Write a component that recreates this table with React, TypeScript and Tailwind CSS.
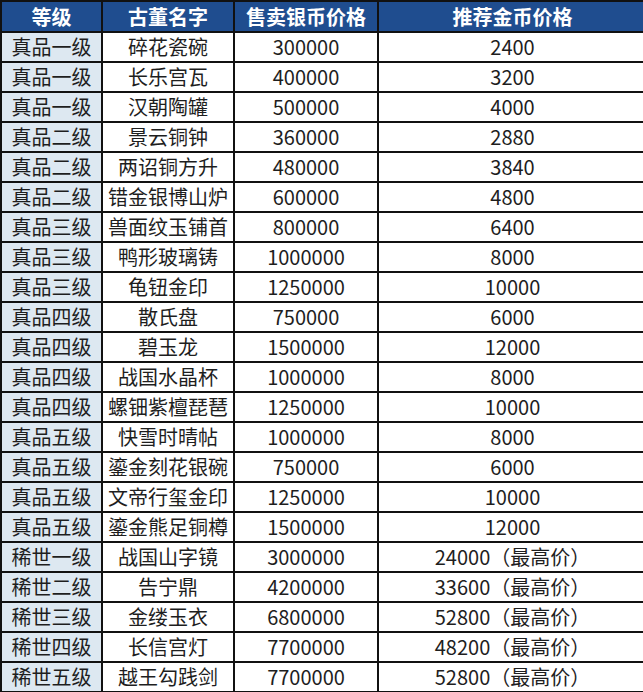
import React from "react";

const rows: [string, string, string, string][] = [
  ["真品一级", "碎花瓷碗", "300000", "2400"],
  ["真品一级", "长乐宫瓦", "400000", "3200"],
  ["真品一级", "汉朝陶罐", "500000", "4000"],
  ["真品二级", "景云铜钟", "360000", "2880"],
  ["真品二级", "两诏铜方升", "480000", "3840"],
  ["真品二级", "错金银博山炉", "600000", "4800"],
  ["真品三级", "兽面纹玉铺首", "800000", "6400"],
  ["真品三级", "鸭形玻璃铸", "1000000", "8000"],
  ["真品三级", "龟钮金印", "1250000", "10000"],
  ["真品四级", "散氏盘", "750000", "6000"],
  ["真品四级", "碧玉龙", "1500000", "12000"],
  ["真品四级", "战国水晶杯", "1000000", "8000"],
  ["真品四级", "螺钿紫檀琵琶", "1250000", "10000"],
  ["真品五级", "快雪时晴帖", "1000000", "8000"],
  ["真品五级", "鎏金刻花银碗", "750000", "6000"],
  ["真品五级", "文帝行玺金印", "1250000", "10000"],
  ["真品五级", "鎏金熊足铜樽", "1500000", "12000"],
  ["稀世一级", "战国山字镜", "3000000", "24000（最高价）"],
  ["稀世二级", "告宁鼎", "4200000", "33600（最高价）"],
  ["稀世三级", "金缕玉衣", "6800000", "52800（最高价）"],
  ["稀世四级", "长信宫灯", "7700000", "48200（最高价）"],
  ["稀世五级", "越王勾践剑", "7700000", "52800（最高价）"],
];

export default function App() {
  return (
    <div
      className="w-[643px] h-[692px] overflow-hidden bg-white"
      style={{ fontFamily: '"Noto Sans CJK SC", "Liberation Sans", sans-serif' }}
    >
      <table className="w-[646px] table-fixed border-collapse text-[20px] text-[#1e1e1e] leading-none">
        <colgroup>
          <col className="w-[101px]" />
          <col className="w-[132px]" />
          <col className="w-[144px]" />
          <col className="w-[269px]" />
        </colgroup>
        <thead>
          <tr className="h-[31px] bg-[#1f4d8f] text-white font-bold text-[20px]">
            <th className="border-2 border-[#111] text-center align-middle">等级</th>
            <th className="border-2 border-[#111] text-center align-middle">古董名字</th>
            <th className="border-2 border-[#111] text-center align-middle">售卖银币价格</th>
            <th className="border-2 border-[#111] text-center align-middle">推荐金币价格</th>
          </tr>
        </thead>
        <tbody>
          {rows.map((r, i) => (
            <tr key={i} className="h-[30px]">
              <td className="border-2 border-[#111] bg-[#dde8f1] text-center align-middle">{r[0]}</td>
              <td className="border-2 border-[#111] bg-white text-center align-middle">{r[1]}</td>
              <td className="border-2 border-[#111] bg-white text-center align-middle">{r[2]}</td>
              <td className="border-2 border-[#111] bg-white text-center align-middle">{r[3]}</td>
            </tr>
          ))}
        </tbody>
      </table>
    </div>
  );
}
